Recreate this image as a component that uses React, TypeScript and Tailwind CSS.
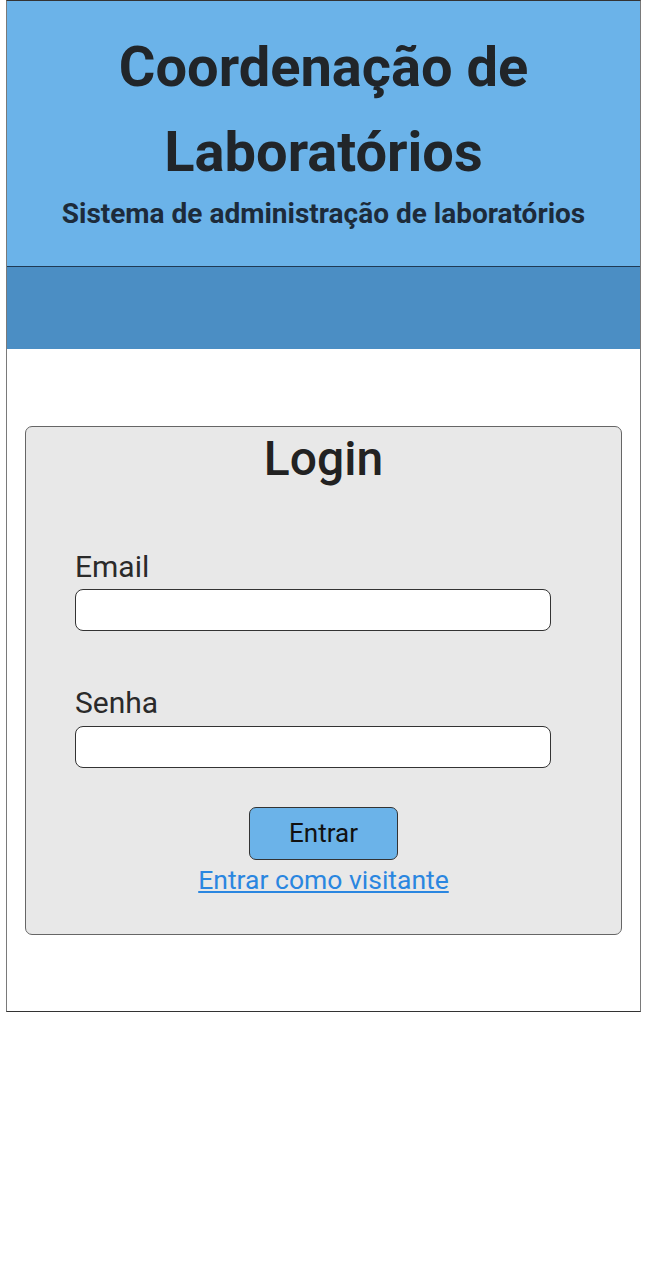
import React from "react";

export default function App() {
  return (
    <div className="w-[649px] bg-white" style={{ fontFamily: "Roboto, 'Noto Sans', sans-serif" }}>
      <div className="ml-[6px] w-[635px] border-x border-x-[#7a7a7a] border-y border-y-[#333]">
        <header className="bg-[#6bb3e9] pt-[24px] pb-[33px] text-center border-b border-b-[#1f3a55]">
          <h1 className="text-[56px] leading-[85px] font-bold text-[#212529]">
            Coordenação de
            <br />
            Laboratórios
          </h1>
          <p className="text-[28px] leading-[38px] font-bold text-[#1d2b3a]">
            Sistema de administração de laboratórios
          </p>
        </header>
        <nav className="h-[82px] bg-[#4b8ec4]" />
        <main className="pt-[77px] pb-[76px] px-[18px]">
          <div className="bg-[#e8e8e8] border border-[#666] rounded-[7px] pt-[4px] pb-[39px]">
            <h2 className="text-center text-[48px] leading-[56px] font-medium text-[#222]">Login</h2>
            <form className="px-[49px]" onSubmit={(e) => e.preventDefault()}>
              <label className="block mt-[63px] text-[30px] leading-[34px] text-[#2a2a2a]">Email</label>
              <input
                type="email"
                className="block mt-[5px] w-[476px] h-[42px] bg-white border border-[#333] rounded-[8px]"
              />
              <label className="block mt-[55px] text-[30px] leading-[34px] text-[#2a2a2a]">Senha</label>
              <input
                type="password"
                className="block mt-[6px] w-[476px] h-[42px] bg-white border border-[#333] rounded-[8px]"
              />
              <div className="flex flex-col items-center -mx-[49px]">
                <button
                  type="submit"
                  className="mt-[39px] w-[149px] h-[53px] bg-[#6bb3e9] border border-[#333] rounded-[7px] text-[26px] text-[#111]"
                >
                  Entrar
                </button>
                <a href="#" className="mt-[5px] text-[26.5px] leading-[30px] text-[#2a86e0] underline">
                  Entrar como visitante
                </a>
              </div>
            </form>
          </div>
        </main>
      </div>
    </div>
  );
}
